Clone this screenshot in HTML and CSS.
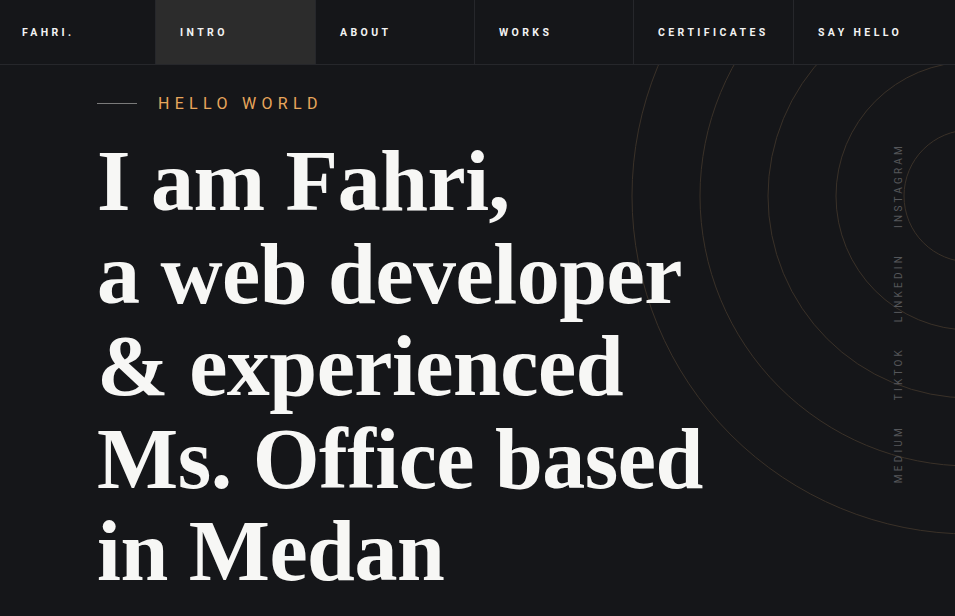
FILE: index.html
```html
<!DOCTYPE html>
<html lang="en">
<head>
<meta charset="utf-8">
<title>Fahri</title>
<link rel="stylesheet" href="styles.css">
</head>
<body>
<div class="page">
  <svg class="rings" width="955" height="616" viewBox="0 0 955 616" aria-hidden="true">
    <g fill="none" stroke="#3a3128" stroke-width="1">
      <circle cx="970" cy="196" r="66"/>
      <circle cx="970" cy="196" r="134"/>
      <circle cx="970" cy="196" r="202"/>
      <circle cx="970" cy="196" r="270"/>
      <circle cx="970" cy="196" r="338"/>
    </g>
  </svg>
  <nav class="nav">
    <a class="nav-item brand">FAHRI.</a>
    <a class="nav-item active">INTRO</a>
    <a class="nav-item">ABOUT</a>
    <a class="nav-item">WORKS</a>
    <a class="nav-item">CERTIFICATES</a>
    <a class="nav-item">SAY HELLO</a>
  </nav>
  <main class="hero">
    <div class="eyebrow">
      <span class="eyebrow-line"></span>
      <span class="eyebrow-text">HELLO WORLD</span>
    </div>
    <h1 class="headline">I am Fahri,<br>a web developer<br>&amp; experienced<br>Ms. Office based<br>in Medan</h1>
  </main>
  <ul class="social">
    <li>INSTAGRAM</li>
    <li>LINKEDIN</li>
    <li>TIKTOK</li>
    <li>MEDIUM</li>
  </ul>
</div>
</body>
</html>
```
FILE: styles.css
```css
* { box-sizing: border-box; }
html, body {
  margin: 0;
  padding: 0;
  background: #151619;
  overflow: hidden;
}
.page {
  position: relative;
  width: 955px;
  height: 616px;
  overflow: hidden;
  background: #151619;
  font-family: Roboto, "Liberation Sans", sans-serif;
}
.rings {
  position: absolute;
  left: 0;
  top: 0;
}
.nav {
  position: relative;
  display: grid;
  grid-template-columns: 156px 160px 159px 159px 160px 161px;
  height: 65px;
  border-bottom: 1px solid #26272b;
  background: #151619;
}
.nav-item {
  display: flex;
  align-items: center;
  padding-left: 24px;
  padding-top: 1px;
  border-right: 1px solid #26272b;
  color: #f2f2f2;
  font-size: 10.5px;
  font-weight: 700;
  letter-spacing: 3.4px;
  text-decoration: none;
}
.nav-item:last-child { border-right: none; }
.nav-item.brand { padding-left: 22px; }
.nav-item.active { background: #2c2c2c; }
.hero {
  position: relative;
  padding: 29px 0 0 97px;
}
.eyebrow {
  display: flex;
  align-items: center;
  gap: 21px;
  height: 18px;
}
.eyebrow-line {
  width: 40px;
  height: 1px;
  background: #7a7a7a;
}
.eyebrow-text {
  color: #e8a75c;
  font-size: 16px;
  letter-spacing: 5.3px;
}
.headline {
  margin: 23px 0 0;
  color: #f7f7f5;
  font-family: "Liberation Serif", "Times New Roman", serif;
  font-weight: 700;
  font-size: 86px;
  line-height: 92.5px;
  letter-spacing: -0.5px;
}
.social {
  position: absolute;
  right: 51px;
  top: 143px;
  margin: 0;
  padding: 0;
  list-style: none;
  display: flex;
  flex-direction: column;
  gap: 25px;
}
.social li {
  writing-mode: vertical-rl;
  transform: rotate(180deg);
  color: #55565a;
  font-size: 10px;
  letter-spacing: 3.2px;
}
```
